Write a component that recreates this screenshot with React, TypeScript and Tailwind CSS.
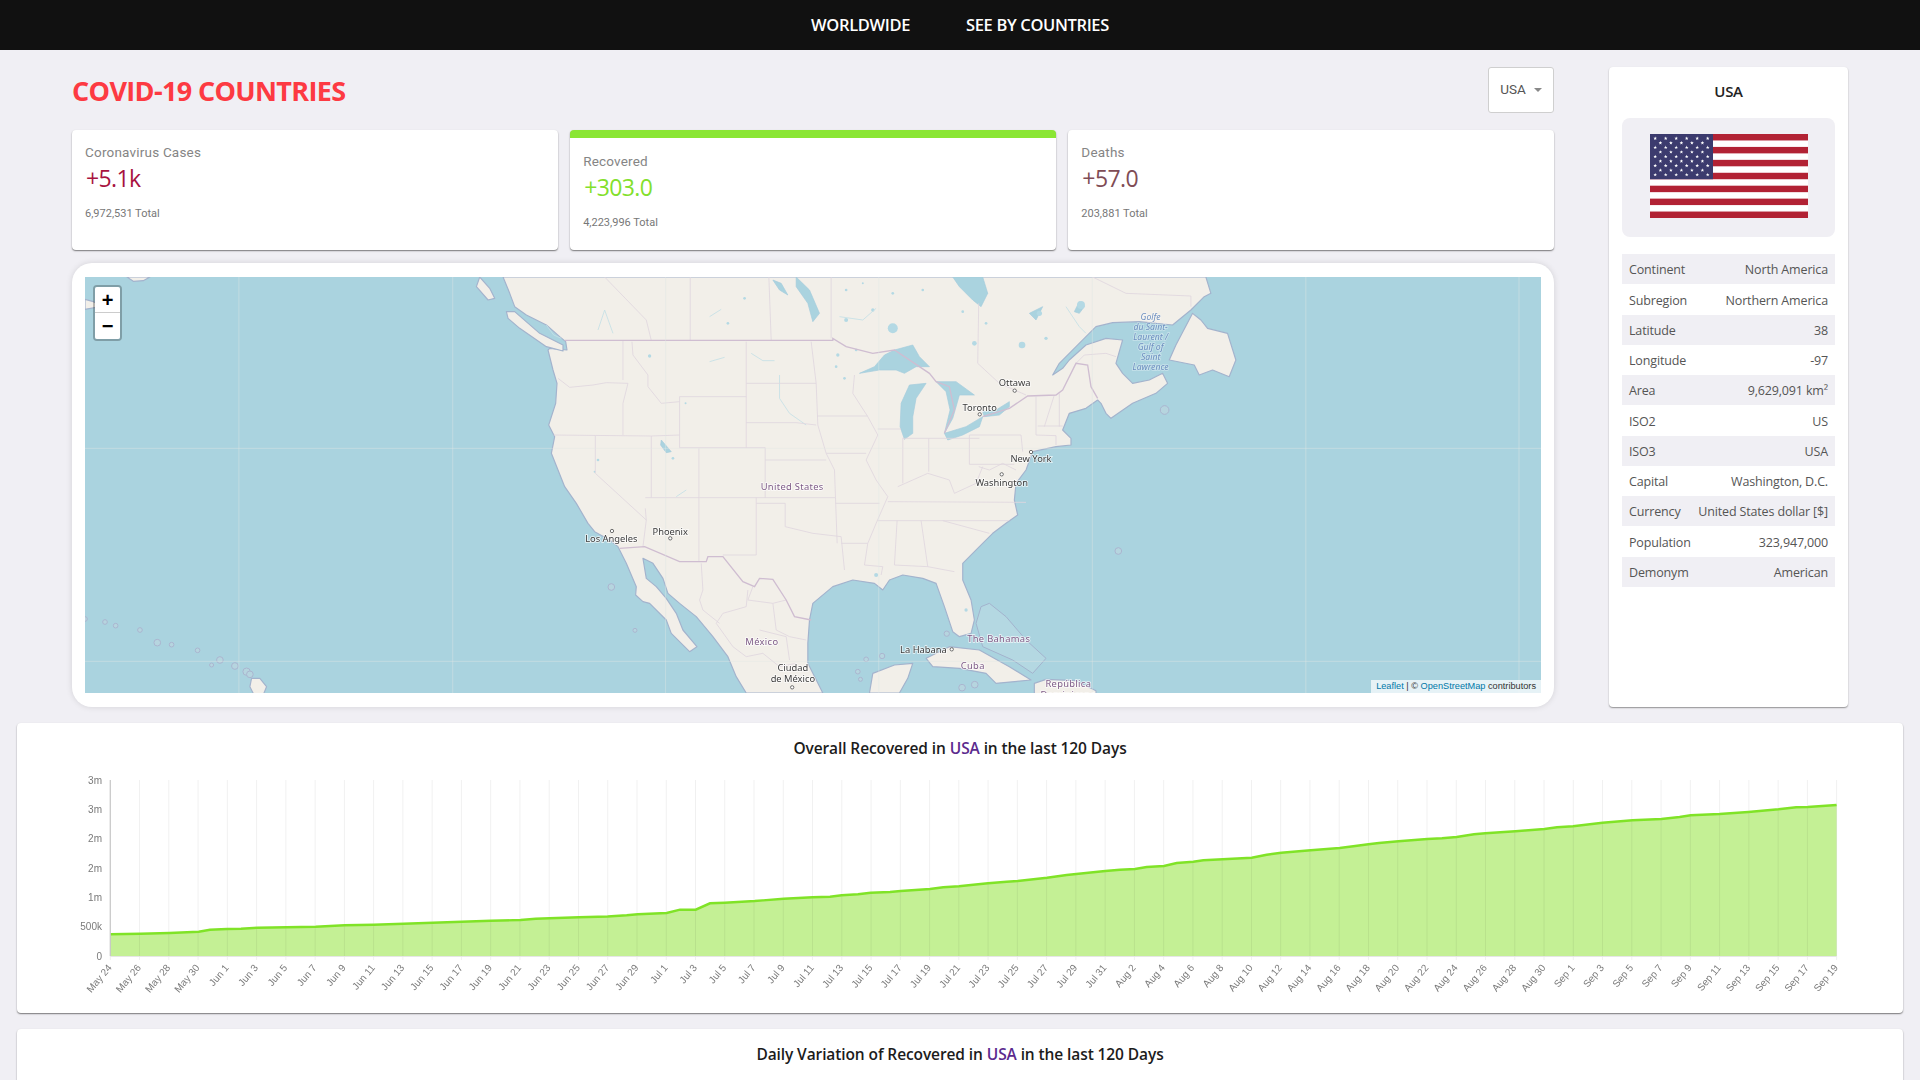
const SEGOE = "[font-family:'Open_Sans',sans-serif]";

const facts = [
  ['Continent', 'North America'],
  ['Subregion', 'Northern America'],
  ['Latitude', '38'],
  ['Longitude', '-97'],
  ['Area', '9,629,091 km²'],
  ['ISO2', 'US'],
  ['ISO3', 'USA'],
  ['Capital', 'Washington, D.C.'],
  ['Currency', 'United States dollar [$]'],
  ['Population', '323,947,000'],
  ['Demonym', 'American'],
];

// chart points, in page pixels
const recovered = [
  [110.3, 934.3], [140.6, 933.7], [169.6, 933], [198.7, 931.7], [210, 929.7], [227, 929], [241, 928.7], [257.6, 927.7],
  [286.6, 927.3], [315.6, 926.7], [344.6, 925.3], [373.7, 924.7], [403.6, 923.7], [432.6, 922.7], [461.6, 921.7],
  [490.6, 920.7], [520.5, 920], [535.7, 918.7], [549.6, 918.3], [579, 917.3], [607.6, 916.5], [626.7, 915.3], [637.7, 914.3],
  [666.7, 913], [680, 909.7], [695.7, 909.7], [710, 903.3], [724.7, 902.7], [754.7, 901], [783.7, 898.7], [812.7, 897.3],
  [830, 896.7], [841.7, 895.3], [858, 894.3], [870.7, 892.7], [890, 892], [900.7, 891], [930, 889], [943.3, 887.3],
  [959, 886.3], [973.3, 884.7], [988, 883.3], [1006.7, 881.7], [1017.7, 881], [1047, 877.7], [1066.7, 875], [1076.3, 874],
  [1105.3, 871], [1120, 869.7], [1135, 869], [1146.7, 867], [1164, 866], [1176.7, 863], [1193.3, 861.7], [1203.3, 860.3],
  [1222.7, 859.3], [1251.7, 857.7], [1266.7, 854.7], [1281.3, 852.7], [1310.7, 850.3], [1339.7, 848], [1353.3, 846.3],
  [1368.4, 844.3], [1379, 843], [1398.5, 841.3], [1427.3, 839], [1442, 838.3], [1456.6, 837], [1474, 834.3], [1485.4, 833.3],
  [1515.5, 831.3], [1544.4, 829], [1557, 827.3], [1573, 826.3], [1602.5, 822.7], [1632.5, 820.3], [1661.4, 819],
  [1679.6, 817], [1690.7, 815.3], [1719.5, 814], [1748.4, 812], [1778.5, 809.3], [1796.2, 807.3], [1807.7, 807], [1836.6, 805],
];

const yTicks = [
  ['3m', 780], ['3m', 809.3], ['2m', 838.7], ['2m', 868], ['1m', 897.3], ['500k', 926.7], ['0', 956],
] as const;

const dateLabels = (() => {
  const out: string[] = [];
  const months = [['May', 31], ['Jun', 30], ['Jul', 31], ['Aug', 31], ['Sep', 30]] as const;
  let m = 0;
  let d = 24;
  for (let i = 0; i < 60; i++) {
    out.push(`${months[m][0]} ${d}`);
    d += 2;
    if (d > months[m][1]) {
      d -= months[m][1];
      m++;
    }
  }
  return out;
})();

const RecoveredChart = () => {
  const line = recovered.map((p) => p.join(',')).join(' ');
  return (
    <svg viewBox="17 775 1886 238" className="block w-full h-[238px] blur-[0.35px]">
      <polygon points={`110.3,956 ${line} 1836.6,956`} fill="#c4f095" />
      {dateLabels.map((label, i) => {
        const x = 110.3 + 29.26 * i;
        return (
          <g key={label}>
            <line x1={x} x2={x} y1={780} y2={960} stroke="#000" strokeOpacity={0.06} />
            <text
              x={x + 2}
              y={968}
              textAnchor="end"
              transform={`rotate(-50 ${x + 2} 968)`}
              fontFamily="'Liberation Sans', sans-serif"
              fontSize={10}
              fill="#7a7a7a"
            >
              {label}
            </text>
          </g>
        );
      })}
      <polyline points={line} fill="none" stroke="#80e327" strokeWidth={2.4} />
      <line x1={110.3} x2={1836.6} y1={956.5} y2={956.5} stroke="#e6e6e6" />
      <line x1={110.3} x2={110.3} y1={780} y2={956} stroke="#c8c8c8" strokeWidth={1.2} />
      {yTicks.map(([label, y]) => (
        <text
          key={y}
          x={102}
          y={y + 3.5}
          textAnchor="end"
          fontFamily="'Liberation Sans', sans-serif"
          fontSize={10}
          fill="#7a7a7a"
        >
          {label}
        </text>
      ))}
    </svg>
  );
};

const Flag = () => {
  const stripe = 84 / 13;
  const stars: [number, number][] = [];
  for (let r = 0; r < 9; r++) {
    const n = r % 2 === 0 ? 6 : 5;
    for (let c = 0; c < n; c++) {
      stars.push([(r % 2 === 0 ? 5.2 : 10.4) + c * 10.5, 4.4 + r * 4.55]);
    }
  }
  return (
    <svg viewBox="0 0 158 84" className="w-[158px] h-[84px]">
      <rect width="158" height="84" fill="#fff" />
      {[0, 2, 4, 6, 8, 10, 12].map((i) => (
        <rect key={i} y={i * stripe} width="158" height={stripe} fill="#b22234" />
      ))}
      <rect width="63" height={stripe * 7} fill="#3c3b6e" />
      {stars.map(([x, y]) => (
        <polygon
          key={`${x}-${y}`}
          transform={`translate(${x} ${y})`}
          points="0,-1.9 .5,-.6 1.8,-.6 .8,.2 1.1,1.5 0,.8 -1.1,1.5 -.8,.2 -1.8,-.6 -.5,-.6"
          fill="#fff"
        />
      ))}
    </svg>
  );
};

const landPath =
  'M70 21L90 70 105 110 140 135 200 165 240 200 258 215 262 240 210 235 205 240 220 300 232 340 228 400 207 465 225 500 215 550 235 600 255 650 290 700 325 760 345 785 390 810 415 830 440 880 470 950 468 975 490 995 510 1000 560 1050 575 1090 630 1145 652 1130 610 1080 590 1030 560 985 530 950 500 925 490 865 520 880 550 925 565 970 600 1000 650 1040 700 1100 745 1160 770 1220 800 1269 1030 1269 985 1180 985 1120 990 1050 1000 1000 1060 950 1120 930 1185 940 1210 960 1230 930 1270 915 1330 925 1370 940 1395 1010 1420 1085 1440 1100 1475 1090 1485 1050 1475 990 1450 930 1450 880 1500 830 1540 790 1580 760 1615 735 1605 690 1610 640 1640 600 1660 545 1730 530 1775 525 1775 505 1750 480 1770 430 1820 415 1855 390 1865 400 1880 430 1895 445 1960 400 2030 370 2065 340 2050 310 2010 330 1960 340 1930 310 1910 280 1930 210 1880 205 1820 225 1770 270 1750 295 1720 315 1740 280 1790 230 1850 170 1900 158 1980 155 2080 165 2135 120 2175 80 2195 70 2180 21Z';

const islands = [
  '80,125 105,125 180,190 250,225 250,243 200,230 120,175 85,145',
  '2070,270 2090,225 2140,130 2165,150 2185,175 2245,190 2270,270 2250,320 2200,300 2160,315 2145,285',
  // cuba
  '1340,1165 1410,1130 1500,1140 1590,1190 1655,1230 1550,1240 1520,1210 1440,1195 1360,1190',
  // hispaniola
  '1665,1240 1700,1228 1790,1232 1850,1262 1850,1290 1665,1290',
  // yucatan
  '1170,1269 1180,1210 1245,1185 1300,1180 1285,1225 1260,1269',
  // alaska bits
  '-1059,21 -1040,34 -1010,32 -990,21',
  '-1185,88 -1160,95 -1130,108 -1185,118',
  // panhandle
  '0,21 30,55 45,85 25,90 -10,50',
  // big island
  '-685,1225 -660,1225 -640,1250 -650,1275 -675,1280 -690,1250',
];

const banks = '1505,1010 1530,1000 1580,1040 1640,1110 1700,1165 1660,1210 1600,1170 1510,1130 1490,1060';

const lakes = [
  '1140,310 1185,290 1215,255 1245,240 1300,225 1320,260 1350,290 1310,290 1275,310 1250,300 1200,300',
  '1262,470 1265,400 1290,345 1340,340 1310,385 1300,440 1300,490 1275,508',
  '1370,335 1430,335 1485,375 1440,375 1420,445 1395,490 1412,420 1400,365',
  '1395,490 1460,470 1510,440 1500,470 1450,495 1405,510',
  '1510,425 1550,420 1590,395 1590,410 1560,435 1515,440',
  '950,21 990,60 1020,130 1000,155 985,100 950,50',
  '880,30 905,40 925,75 900,60',
  '1420,21 1510,21 1525,70 1505,110 1480,90 1440,50',
  '545,510 575,545 560,548 543,525',
  '1650,130 1690,110 1670,150',
  '1785,125 1800,95 1815,110 1800,130',
];

const smallWater: [number, number, number][] = [
  [1240, 175, 15], [1805, 105, 12], [1628, 225, 10], [1485, 220, 7], [1680, 130, 8], [1100, 150, 6], [1180, 120, 5],
  [1130, 240, 4], [1075, 255, 5], [1095, 325, 4], [510, 258, 5], [618, 400, 3], [580, 565, 4], [355, 570, 4], [345, 605, 3],
  [1070, 290, 4], [1240, 70, 4], [1100, 60, 4], [1330, 60, 4], [1150, 40, 3], [795, 85, 4], [745, 160, 4], [1460, 1020, 5],
  [1190, 915, 6], [1450, 125, 4], [1520, 160, 4], [1700, 205, 5],
];

const rivers = [
  '690,275 735,262',
  '815,250 850,272 885,272',
  '690,140 725,118',
  '355,180 375,120 400,190',
  '200,165 222,195 245,205',
  '900,315 900,385 930,430 980,465',
  '1760,110 1800,170 1820,190',
  '1080,140 1150,150 1190,115',
  '590,680 620,660',
];

const borders = [
  '255,211 1060,211 1060,205 1100,230 1180,250 1245,240 1350,310 1370,335 1410,350 1425,420 1395,490',
  '1510,440 1590,415 1645,378 1730,375 1750,360 1790,280 1825,285 1835,350 1855,385',
  '420,835 495,830 600,875 680,875 685,860 730,860 790,935 825,950 840,925 880,928 920,990 945,1040 995,1050',
];

const stateLines = [
  '430,211 430,330',
  '235,325 270,352 340,345 380,338 445,340 430,400 430,495',
  '222,495 515,498 600,495',
  '457,215 460,255 505,315 505,350 545,400 600,395',
  '800,215 800,533',
  '600,380 800,380',
  '600,380 600,533 800,533',
  '800,340 1010,340',
  '800,458 950,458 1010,465',
  '800,533 857,533 857,570 1040,570',
  '995,215 1010,340 1015,465 1040,550 1065,600 1068,683 1073,820',
  '347,497 347,610 500,750',
  '515,498 515,683',
  '497,683 1068,683',
  '658,535 658,875',
  '497,715 500,750 490,830',
  '830,683 830,855 730,855',
  '830,700 917,700 917,770 1000,790 1085,800 1095,900',
  '857,570 857,683',
  '1068,700 1200,700',
  '1085,820 1165,820 1155,885 1210,890 1205,915',
  '1015,438 1165,438',
  '1040,550 1160,550',
  '1125,315 1120,370 1165,440 1195,495 1160,570 1190,630 1225,680 1190,760 1165,820',
  '1195,477 1265,477',
  '1270,505 1270,640',
  '1348,505 1348,605',
  '1270,505 1500,505',
  '1225,695 1640,697',
  '1195,752 1590,752',
  '1253,752 1245,885',
  '1325,752 1345,890 1425,905',
  '1245,885 1345,890',
  '1255,650 1345,610 1410,630 1425,670 1490,640 1510,590',
  '1390,752 1530,790',
  '1470,495 1625,495 1630,545',
  '1470,495 1470,583 1605,583',
  '1670,380 1670,495 1730,497 1730,525',
  '1725,375 1695,470',
  '1740,370 1740,470',
  '1675,468 1750,468',
  '1498,590 1530,600 1570,580 1610,600',
  // canada
  '632,21 632,211',
  '868,21 875,211',
  '1055,21 1055,205',
  '375,21 500,150 515,211',
  '1498,100 1495,280 1560,340 1640,375',
  '1840,21 1940,70 2135,78 2135,110',
  '1790,280 1815,255 1880,250 1910,260',
  // mexico
  '665,880 670,960 660,990 670,1020 720,1060',
  '805,960 800,1010 730,1030 710,1060 760,1130 800,1160',
  '820,950 805,990 880,1000 920,990',
  '880,1000 890,1080 930,1100 980,1110',
  '840,1080 920,1100 930,1170',
  '800,1160 850,1150 900,1190 950,1180',
];

const specks: [number, number, number][] = [
  // hawaii chain
  [-1185, 1047, 7], [-1125, 1056, 7], [-1093, 1067, 7], [-1020, 1080, 7], [-968, 1118, 10], [-925, 1124, 7], [-847, 1141, 7],
  [-805, 1185, 6], [-780, 1170, 10], [-735, 1188, 10], [-700, 1205, 11], [-690, 1213, 10],
  // pacific / caribbean / atlantic specks
  [395, 951, 10], [466, 1081, 6], [1160, 1168, 7], [1208, 1158, 8], [1135, 1205, 7], [1143, 1228, 6], [1402, 1091, 8],
  [1917, 843, 10], [2056, 420, 13], [1448, 1253, 10], [1486, 1244, 10],
];

const mapLabels: { x: number; y: number; t: string; cls?: 'country' | 'water' }[] = [
  { x: 395, y: 807, t: 'Los Angeles' },
  { x: 572, y: 786, t: 'Phoenix' },
  { x: 938, y: 651, t: 'United States', cls: 'country' },
  { x: 847, y: 1116, t: 'México', cls: 'country' },
  { x: 940, y: 1195, t: 'Ciudad' },
  { x: 940, y: 1228, t: 'de México' },
  { x: 1332, y: 1139, t: 'La Habana' },
  { x: 1606, y: 338, t: 'Ottawa' },
  { x: 1501, y: 413, t: 'Toronto' },
  { x: 1655, y: 566, t: 'New York' },
  { x: 1567, y: 640, t: 'Washington' },
  { x: 1558, y: 1107, t: 'The Bahamas', cls: 'country' },
  { x: 1480, y: 1189, t: 'Cuba', cls: 'country' },
  { x: 1767, y: 1241, t: 'República', cls: 'country' },
  { x: 1767, y: 1274, t: 'Dominicana', cls: 'country' },
  { x: 2014, y: 141, t: 'Golfe', cls: 'water' },
  { x: 2014, y: 171, t: 'du Saint-', cls: 'water' },
  { x: 2014, y: 200, t: 'Laurent /', cls: 'water' },
  { x: 2014, y: 230, t: 'Gulf of', cls: 'water' },
  { x: 2014, y: 260, t: 'Saint', cls: 'water' },
  { x: 2014, y: 290, t: 'Lawrence', cls: 'water' },
];

const gridX = [-723, -81, 558, 1198, 1839, 2480, 3120];
const gridY = [535, 1174];

const USMap = () => (
  <svg
    viewBox="-1185 21 4371 1248"
    preserveAspectRatio="none"
    className="absolute inset-0 w-full h-full blur-[0.4px]"
    fontFamily="'Noto Sans', sans-serif"
  >
    <rect x="-1185" y="21" width="4371" height="1248" fill="#aad3df" />
    <polygon points={banks} fill="#b4d8e2" stroke="#a3b3cd" strokeWidth="3" />
    <path d={landPath} fill="#f2efe9" stroke="#a3b3cd" strokeWidth="3.5" strokeLinejoin="round" />
    {islands.map((p) => (
      <polygon key={p} points={p} fill="#f2efe9" stroke="#a3b3cd" strokeWidth="3.5" strokeLinejoin="round" />
    ))}
    {lakes.map((p) => (
      <polygon key={p} points={p} fill="#aad3df" stroke="#a5cbdc" strokeWidth="2" />
    ))}
    {smallWater.map(([x, y, r]) => (
      <circle key={`${x}-${y}`} cx={x} cy={y} r={r} fill="#b4d9e4" />
    ))}
    {rivers.map((p) => (
      <polyline key={p} points={p} fill="none" stroke="#c4e0e6" strokeWidth="2.5" />
    ))}
    {specks.map(([x, y, r]) => (
      <circle key={`${x}-${y}`} cx={x} cy={y} r={r} fill="#b6d5df" stroke="#aab5cf" strokeWidth="3" />
    ))}
    {stateLines.map((p) => (
      <polyline key={p} points={p} fill="none" stroke="#e0d6df" strokeWidth="2.5" />
    ))}
    {borders.map((p) => (
      <polyline key={p} points={p} fill="none" stroke="#cfbdd1" strokeWidth="4" />
    ))}
    {gridX.map((x) => (
      <line key={x} x1={x} x2={x} y1={21} y2={1269} stroke="#dfe6e4" strokeOpacity={0.45} strokeWidth="3" />
    ))}
    {gridY.map((y) => (
      <line key={y} y1={y} y2={y} x1={-1185} x2={3186} stroke="#dfe6e4" strokeOpacity={0.45} strokeWidth="3" />
    ))}
    {[[397, 783], [572, 805], [1606, 362], [1501, 433], [1655, 546], [1567, 613], [1417, 1138], [938, 1252]].map(
      ([x, y]) => (
        <circle key={`${x}-${y}`} cx={x} cy={y} r="5" fill="#fff" stroke="#555" strokeWidth="2.5" />
      ),
    )}
    {mapLabels.map((l) => (
      <text
        key={l.t}
        x={l.x}
        y={l.y + 9}
        textAnchor="middle"
        fontSize={l.cls === 'water' ? 26 : 28}
        fontStyle={l.cls === 'water' ? 'italic' : 'normal'}
        fill={l.cls === 'country' ? '#7d5a86' : l.cls === 'water' ? '#6d8fc0' : '#3a3a3a'}
        stroke="#fff"
        strokeOpacity={l.cls === 'water' ? 0.35 : 0.75}
        strokeWidth="5"
        paintOrder="stroke"
        letterSpacing={l.cls === 'country' ? 1 : 0}
      >
        {l.t}
      </text>
    ))}
  </svg>
);

const StatCard = ({
  label,
  value,
  total,
  color,
  active,
}: {
  label: string;
  value: string;
  total: string;
  color: string;
  active?: boolean;
}) => (
  <div
    className={`bg-white rounded-[4px] shadow-[0_1px_1.5px_rgba(0,0,0,0.5)] px-[13px] overflow-hidden ${
      active ? 'border-t-[8px] border-[#8ae634] pt-[14px]' : 'pt-[13px]'
    }`}
  >
    <p className="[font-family:Roboto,sans-serif] text-[13.5px] leading-[18px] tracking-[0.2px] text-[#858585]">{label}</p>
    <p className={`${SEGOE} text-[23px] leading-[30px] mt-[2px] ml-[1px] tracking-[-0.6px] ${color}`}>{value}</p>
    <p className="[font-family:Roboto,sans-serif] text-[11px] leading-[14px] mt-[14px] text-[#777]">{total}</p>
  </div>
);

const ChartTitle = ({ before, after }: { before: string; after: string }) => (
  <h2 className={`${SEGOE} h-[52px] flex items-center justify-center text-[15.5px] font-semibold tracking-[-0.1px] text-[#1c1c1c] whitespace-pre`}>
    {before}
    <span className="text-[#5b2a8e]">USA</span>
    {after}
  </h2>
);

export default function App() {
  return (
    <div className="h-[1080px] overflow-hidden bg-[#f0eff4]">
      <nav className={`${SEGOE} h-[50px] bg-[#111111] flex items-center justify-center gap-[56px] text-white text-[16.5px] font-semibold tracking-[-0.35px]`}>
        <span>WORLDWIDE</span>
        <span>SEE BY COUNTRIES</span>
      </nav>

      <div className="flex pl-[72px] pt-[17px] gap-[55px]">
        <main className="w-[1482px]">
          <div className="h-[63px] flex items-start justify-between">
            <h1 className={`${SEGOE} text-[27px] leading-[48px] font-bold tracking-[-0.65px] text-[#fd3a42]`}>COVID-19 COUNTRIES</h1>
            <button className="h-[46px] w-[66px] bg-white border border-[#cfcfcf] rounded-[3px] flex items-center justify-center gap-[8px] pb-[2px] [font-family:Roboto,sans-serif] text-[13.5px] text-[#555]">
              USA
              <span className="w-0 h-0 border-x-[4px] border-x-transparent border-t-[4px] border-t-[#888] mt-[2px]" />
            </button>
          </div>

          <div className="grid grid-cols-3 gap-[12.5px] h-[120px]">
            <StatCard label="Coronavirus Cases" value="+5.1k" total="6,972,531 Total" color="text-[#a8123f]" />
            <StatCard label="Recovered" value="+303.0" total="4,223,996 Total" color="text-[#83e02c]" active />
            <StatCard label="Deaths" value="+57.0" total="203,881 Total" color="text-[#804c55]" />
          </div>

          <section className="mt-[13px] h-[444px] bg-white rounded-[20px] px-[13px] py-[14px] shadow-[0_0_6px_rgba(0,0,0,0.12)]">
            <div className="relative w-full h-full overflow-hidden">
              <USMap />
              <div className="absolute left-[8px] top-[8px] w-[29px] rounded-[4px] border-2 border-black/25 bg-clip-padding">
                <div className="h-[26px] bg-white rounded-t-[2px] border-b border-[#ccc] flex items-center justify-center [font-family:'Liberation_Sans',sans-serif] font-bold text-[20px] text-black leading-none">+</div>
                <div className="h-[26px] bg-white rounded-b-[2px] flex items-center justify-center [font-family:'Liberation_Sans',sans-serif] font-bold text-[20px] text-black leading-none">−</div>
              </div>
              <div className="absolute right-0 bottom-0 h-[13px] px-[5px] bg-white/70 flex items-center whitespace-pre [font-family:'Liberation_Sans',sans-serif] text-[9.2px] text-[#333]">
                <span className="text-[#0078a8]">Leaflet</span> | © <span className="text-[#0078a8]">OpenStreetMap</span> contributors
              </div>
            </div>
          </section>
        </main>

        <aside className="w-[239px] h-[640px] bg-white rounded-[4px] shadow-[0_1px_1.5px_rgba(0,0,0,0.4)] px-[13px]">
          <h3 className={`${SEGOE} h-[49px] mb-[2px] flex items-center justify-center text-[15px] font-semibold tracking-[-0.3px] text-[#222]`}>USA</h3>
          <div className="h-[119px] rounded-[8px] bg-[#f0eff4] flex items-center justify-center pb-[4px]">
            <Flag />
          </div>
          <div className="mt-[17px] h-[333px] flex flex-col">
            {facts.map(([k, v], i) => (
              <div
                key={k}
                className={`${SEGOE} flex-1 flex items-center justify-between px-[7px] pt-[3px] text-[12.5px] tracking-[-0.15px] text-[#555] whitespace-nowrap ${
                  i % 2 === 0 ? 'bg-[#f0eff4]' : ''
                }`}
              >
                <span>{k}</span>
                <span>{v}</span>
              </div>
            ))}
          </div>
        </aside>
      </div>

      <div className="px-[17px] mt-[16px] flex flex-col gap-[16px]">
        <section className="h-[290px] bg-white rounded-[4px] shadow-[0_1px_1.5px_rgba(0,0,0,0.5)]">
          <ChartTitle before="Overall Recovered in " after=" in the last 120 Days" />
          <RecoveredChart />
        </section>
        <section className="h-[290px] bg-white rounded-[4px] shadow-[0_1px_1.5px_rgba(0,0,0,0.5)]">
          <ChartTitle before="Daily Variation of Recovered in " after=" in the last 120 Days" />
        </section>
      </div>
    </div>
  );
}
